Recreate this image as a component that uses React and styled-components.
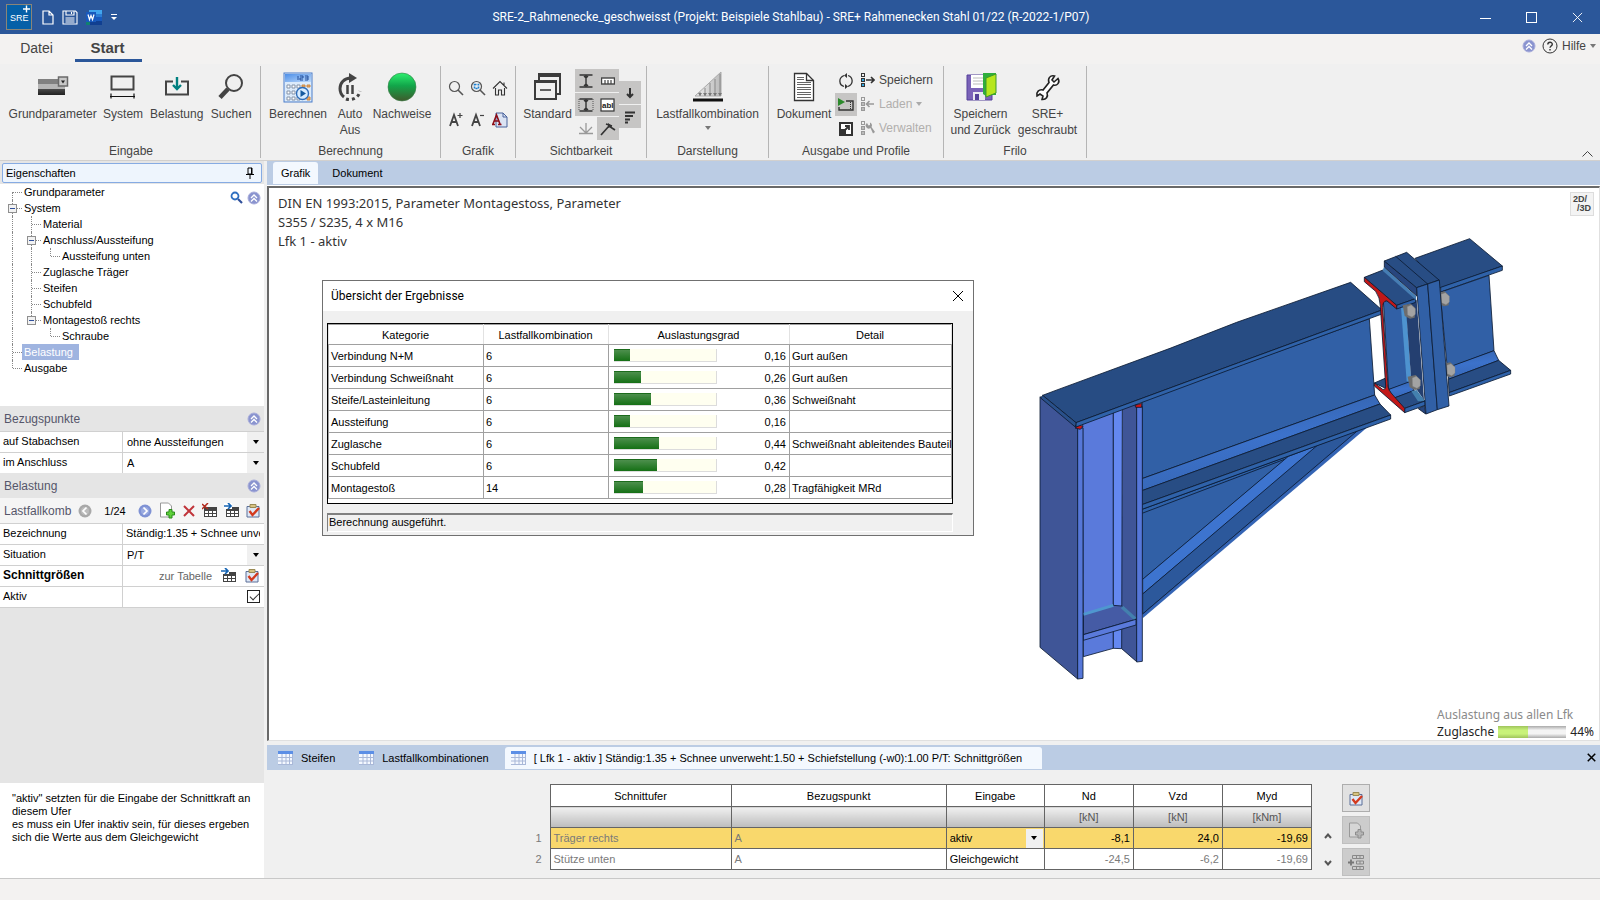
import { useState } from "react";
import styled, { createGlobalStyle } from "styled-components";

const treeRows = [
  { label: "Grundparameter", guides: ["first"] },
  { label: "System", guides: ["tee"], open: true },
  { label: "Material", guides: ["line", "tee"] },
  { label: "Anschluss/Aussteifung", guides: ["line", "tee"], open: true },
  { label: "Aussteifung unten", guides: ["line", "line", "end"] },
  { label: "Zuglasche Träger", guides: ["line", "tee"] },
  { label: "Steifen", guides: ["line", "tee"] },
  { label: "Schubfeld", guides: ["line", "tee"] },
  { label: "Montagestoß rechts", guides: ["line", "end"], open: true },
  { label: "Schraube", guides: ["line", "none", "end"] },
  { label: "Belastung", guides: ["tee"] },
  { label: "Ausgabe", guides: ["end"] },
];

const results = [
  { name: "Verbindung N+M", lfk: 6, value: 0.16, detail: "Gurt außen" },
  { name: "Verbindung Schweißnaht", lfk: 6, value: 0.26, detail: "Gurt außen" },
  { name: "Steife/Lasteinleitung", lfk: 6, value: 0.36, detail: "Schweißnaht" },
  { name: "Aussteifung", lfk: 6, value: 0.16, detail: "" },
  { name: "Zuglasche", lfk: 6, value: 0.44, detail: "Schweißnaht ableitendes Bauteil" },
  { name: "Schubfeld", lfk: 6, value: 0.42, detail: "" },
  { name: "Montagestoß", lfk: 14, value: 0.28, detail: "Tragfähigkeit MRd" },
];

/* ---------- icons ---------- */

const Svg = ({ w = 16, h = w, box, children }) => (
  <svg width={w} height={h} viewBox={box || `0 0 ${w} ${h}`} fill="none" aria-hidden="true">
    {children}
  </svg>
);

const RoundChevron = () => (
  <Svg w={14}>
    <circle cx="7" cy="7" r="6" fill="#8a94cf" stroke="#a9addb" />
    <path d="M4 7 7 4l3 3M4 10.500l3-3 3 3" stroke="#fff" strokeWidth="1.300" />
  </Svg>
);

const Logo = () => (
  <Svg w={26}>
    <rect x="0.500" y="0.500" width="25" height="25" fill="#0560a8" stroke="#8a8578" />
    <text x="4" y="17" fontSize="9" fill="#fff" fontFamily="Liberation Sans, sans-serif">
      SRE
    </text>
    <path d="M20.500 1.500v7M17 5h7" stroke="#fff" strokeWidth="1.400" />
  </Svg>
);

const NewDoc = () => (
  <Svg w={12} h={15}>
    <path d="M1 1h6l4 4v9H1zM7 1v4h4" stroke="#fff" strokeWidth="1.200" />
  </Svg>
);

const Disk = () => (
  <Svg w={16} h={15}>
    <path d="M1 1h12.500L15 2.500V14H1zM4 1v4h8V1M9.500 2v2M3.500 8h9M3.500 10h9M3.500 12h9" stroke="#fff" strokeWidth="1.100" />
  </Svg>
);

const WordIcon = () => (
  <Svg w={16}>
    <path d="M3 1h13v4H3z" fill="#41a5ee" />
    <path d="M3 5h13v3H3z" fill="#2b7cd3" />
    <path d="M3 8h13v4H3z" fill="#185abd" />
    <path d="M3 12h13v4H3z" fill="#103f91" />
    <path d="M0 12h4v4H0z" fill="#108070" />
    <path d="M0 3h10v10H0z" fill="#185abd" />
    <path d="M2 5.500 3.500 10.500 5 6.500l1.500 4L8 5.500" stroke="#fff" strokeWidth="1.200" />
  </Svg>
);

const Customize = () => (
  <Svg w={8}>
    <path d="M1 1.500h6" stroke="#fff" />
    <path d="M1 4h6L4 7z" fill="#fff" />
  </Svg>
);

const ParamIcon = () => (
  <Svg w={32} h={22}>
    <defs>
      <linearGradient id="dark" x1="0" y1="0" x2="0" y2="1">
        <stop offset="0" stopColor="#4a4a4a" />
        <stop offset="1" stopColor="#222" />
      </linearGradient>
    </defs>
    <path d="M1 3h21v5H1z" fill="#808080" />
    <path d="M1 8h27v5H1z" fill="#b5b5b5" />
    <path d="M1 13h27v6H1z" fill="url(#dark)" />
    <rect x="21.500" y="1" width="9" height="9" fill="#c8c8c8" stroke="#6a6a6a" strokeWidth="1.500" />
    <path d="M24 4.500h4l-2 3z" fill="#222" />
  </Svg>
);

const SystemIcon = () => (
  <Svg w={28} h={24}>
    <rect x="2.500" y="1.500" width="22" height="13" stroke="#444" strokeWidth="2" />
    <path d="M1 21.500h25M2 18.500v5M25 18.500v5" stroke="#111" strokeWidth="1.200" />
  </Svg>
);

const LoadIcon = () => (
  <Svg w={26} h={20}>
    <path d="M9 4.500H2v13h22v-13h-7" stroke="#444" strokeWidth="2" />
    <path d="M13 0v11M9 8l4 4 4-4" stroke="#008080" strokeWidth="2.400" />
  </Svg>
);

const SearchIcon = () => (
  <Svg w={28}>
    <circle cx="17" cy="10" r="8" stroke="#444" strokeWidth="2" />
    <path d="M11 16 3 24.500" stroke="#444" strokeWidth="4.500" />
  </Svg>
);

const CalcIcon = () => (
  <Svg w={30} h={31}>
    <defs>
      <linearGradient id="calc" x1="0" y1="0" x2="1" y2="1">
        <stop offset="0" stopColor="#4d8fe8" />
        <stop offset="1" stopColor="#bcd9fb" />
      </linearGradient>
    </defs>
    <rect x="1" y="1" width="28" height="29" fill="#dcebfb" stroke="#4a7cc9" />
    <path d="M2 2h26v8H2z" fill="url(#calc)" />
    <path d="M15 4v4M17 4h3v2h-3v2h3M22 4h3v4h-3M22 6h3" stroke="#234f9b" />
    <path
      d="M4 13h3v3H4zM9 13h3v3H9zM14 13h3v3h-3zM4 19h3v3H4zM9 19h3v3H9zM4 25h3v3H4zM9 25h3v3H9zM14 25h3v3h-3z"
      fill="#fff"
      stroke="#8493a8"
    />
    <path d="M19 13h3v2h-3zM24 13h3v2h-3zM24 25h3v3h-3z" fill="#f2a65a" stroke="#c98a48" />
    <circle cx="19.500" cy="21.500" r="6" fill="#d7ecff" stroke="#2f6db8" strokeWidth="1.400" />
    <path d="m17.500 18 5.500 3.500-5.500 3.500z" fill="#155a9f" />
  </Svg>
);

const AutoIcon = () => (
  <Svg w={26} h={30}>
    <path d="M14 6C7 6 3 11 3 16.500c0 4 2 7 4 8.500" stroke="#444" strokeWidth="3" />
    <path d="M12 1v10l8-5z" fill="#444" />
    <path d="M10.500 13v9M15.500 13v9" stroke="#444" strokeWidth="2.500" />
    <path d="M9 27c5 2 13-1 14-8" stroke="#444" strokeWidth="3" strokeDasharray="3 3" />
  </Svg>
);

const GreenBall = () => (
  <Svg w={30}>
    <defs>
      <linearGradient id="ball" x1="0" y1="0" x2="0" y2="1">
        <stop offset="0" stopColor="#2df06f" />
        <stop offset="0.450" stopColor="#12a64a" />
        <stop offset="1" stopColor="#3f5a2c" />
      </linearGradient>
    </defs>
    <circle cx="15" cy="15" r="14" fill="url(#ball)" stroke="#3a7d4a" strokeWidth="0.600" />
  </Svg>
);

const Lens = ({ inner }) => (
  <Svg w={16}>
    <circle cx="6.500" cy="6.500" r="5" stroke="#555" strokeWidth="1.200" />
    <path d="m10 10 5 5" stroke="#555" strokeWidth="1.600" />
    {inner && <rect x="4.500" y="4.500" width="4" height="4" stroke="#1a7fd0" strokeWidth="1.600" strokeDasharray="2 1" />}
  </Svg>
);

const Home = () => (
  <Svg w={16}>
    <path d="m1 8.500 7-7 7 7M3.500 8v7h3v-5h3v5h3V8M12 2.500v3" stroke="#333" strokeWidth="1.100" />
  </Svg>
);

const FontSize = ({ plus }) => (
  <Svg w={16}>
    <path d="m2 14 4-11 4 11M3.500 10h5" stroke="#444" strokeWidth="1.800" />
    <path d={plus ? "M12 1v5M9.500 3.500h5" : "M10 3.500h4"} stroke="#444" strokeWidth="1.200" />
  </Svg>
);

const FontPage = () => (
  <Svg w={16}>
    <path d="M4 1h7l4 4v10H4z" fill="#dbe3f3" stroke="#49639b" />
    <path d="M11 1v4h4" stroke="#49639b" />
    <path d="m1 12 3.500-9L8 12M2.500 9h4M0 12.500h3M6 12.500h3.500" stroke="#8c0d18" strokeWidth="1.600" />
  </Svg>
);

const StandardIcon = () => (
  <Svg w={30}>
    <path d="M6 9V2h21v20h-4" stroke="#3c3c3c" strokeWidth="2" />
    <path d="M6 3.500h21" stroke="#3c3c3c" strokeWidth="3" />
    <rect x="2" y="9" width="21" height="18" fill="#f0f0f0" stroke="#3c3c3c" strokeWidth="2" />
    <path d="M2 9.500h21" stroke="#3c3c3c" strokeWidth="3" />
    <path d="M7 18h11" stroke="#3c3c3c" strokeWidth="1.600" />
  </Svg>
);

const BeamSec = ({ framed }) => (
  <Svg w={16}>
    {framed && <path d="M1 2v12M15 2v12" stroke="#555" strokeDasharray="1 1" />}
    <path d="M1.500 2h13M1.500 14h13" stroke="#333" strokeWidth="1.600" />
    <path d="M8 2v12M6 3l2 2 2-2M6 13l2-2 2 2" stroke="#333" strokeWidth="1.400" />
  </Svg>
);

const Ruler = () => (
  <Svg w={14} h={8}>
    <rect x="0.500" y="1" width="13" height="6" fill="#fff" stroke="#444" strokeWidth="1.400" />
    <path d="M4 3v4M7 3v4M10 3v4" stroke="#444" strokeWidth="1.200" />
  </Svg>
);

const LabelIcon = () => (
  <Svg w={16} h={14}>
    <rect x="1" y="1" width="13" height="12" fill="#fff" stroke="#333" strokeWidth="1.200" />
    <text x="2" y="10" fontSize="8" fontWeight="700" fill="#222" fontFamily="Liberation Sans, sans-serif">
      abl
    </text>
  </Svg>
);

const DownArrow = () => (
  <Svg w={10} h={14}>
    <path d="M5 2v9M2 8l3 3 3-3" stroke="#333" strokeWidth="2" />
  </Svg>
);

const BarsIcon = () => (
  <Svg w={14}>
    <path d="M2 2.500h10M2 6h8M2 9.500h5M2 12.500h3" stroke="#333" strokeWidth="2.200" />
  </Svg>
);

const FanIcon = () => (
  <Svg w={16}>
    <path d="M1 12.500h14M8 2v10M8 12 2 6M8 12l6-6" stroke="#999" strokeWidth="1.300" />
  </Svg>
);

const AxisIcon = () => (
  <Svg w={16}>
    <path d="m1 14 8-9 6 4M6 3l6 2" stroke="#333" strokeWidth="1.700" />
    <path d="m8 2 4 3-4 2z" fill="#333" />
  </Svg>
);

const LoadCombo = () => (
  <Svg w={32} h={32}>
    <defs>
      <linearGradient id="tri" x1="0" y1="0" x2="1" y2="0">
        <stop offset="0" stopColor="#eee" />
        <stop offset="1" stopColor="#bbb" />
      </linearGradient>
    </defs>
    <path d="M3 25 29 1v24z" fill="url(#tri)" stroke="#aaa" />
    <path d="M8 21v4M13 17v8M18 12v13M23 8v17M28 3v22" stroke="#888" />
    <path d="m6 22 2 3 2-3m1 0 2 3 2-3m1 0 2 3 2-3m1 0 2 3 2-3m1 0 2 3 2-3" fill="#777" />
    <path d="M1 29h30" stroke="#111" strokeWidth="3" />
  </Svg>
);

const DocIcon = () => (
  <Svg w={22} h={30}>
    <path d="M1.500 1.500h12l7 7v20h-19z" fill="#fff" stroke="#333" strokeWidth="1.300" />
    <path d="M13.500 1.500v7h7" stroke="#333" strokeWidth="1.300" />
    <path
      d="M4 5.500h7M4 7.500h7M4 10.500h14M4 12.500h14M4 15.500h14M4 17.500h14M4 20.500h14M4 22.500h14M4 25.500h14"
      stroke="#666"
    />
  </Svg>
);

const Refresh = () => (
  <Svg w={14} h={16}>
    <path d="M5 2.500C-1 5 0 12 5 13.500M9 13.500c6-2.500 5-9.500 0-11" stroke="#333" strokeWidth="1.300" />
    <path d="M8 0v5L5 2.500zM6 16v-5l3 2.500z" fill="#333" />
  </Svg>
);

const PlayFilm = () => (
  <Svg w={16} h={14}>
    <path d="M8 3h7v9H1V9" stroke="#333" strokeWidth="1.400" />
    <path d="M12.500 4v8" stroke="#333" strokeDasharray="1 1" />
    <path d="m0 0 7 4-7 4z" fill="#2c8a2c" />
  </Svg>
);

const Expand = () => (
  <Svg w={14}>
    <path d="M1 1h12v12H1z" fill="#fff" stroke="#333" strokeWidth="2" />
    <path d="M1 7h6v6H1z" fill="#333" />
    <path d="m5 9 5-5M6 4h4v4" stroke="#333" strokeWidth="1.800" />
  </Svg>
);

const ProfileIcon = ({ kind }) => {
  const c = kind === "save" ? "#333" : "#999";
  const f = kind === "save" ? "#35a8e0" : "#bbb";
  return (
    <Svg w={14}>
      <rect x="0.500" y="0.500" width="3" height="3" stroke={c} />
      <rect x="0.500" y="5.500" width="3" height="3" fill={f} stroke={c} />
      <rect x="0.500" y="10.500" width="3" height="3" fill={f} stroke={c} />
      {kind === "save" && <path d="M5 7h8M10 4l3 3-3 3" stroke={c} strokeWidth="1.600" />}
      {kind === "load" && <path d="M5.500 7H13M8.500 4l-3 3 3 3" stroke={c} strokeWidth="1.600" />}
      {kind === "manage" && (
        <path d="M6 2a3 3 0 0 0 3.500 5L12 12.500l2-1.500-3.500-5A3 3 0 0 0 9 1.500V4L7.500 4.500z" fill={c} />
      )}
    </Svg>
  );
};

const SaveBack = () => (
  <Svg w={32} h={30}>
    <path d="M2 3h25v25H2z" fill="#7a62b8" stroke="#54419a" />
    <path d="M6 3h14v13H6z" fill="#fff" />
    <path d="M8 6h10M8 9h10M8 12h10" stroke="#bbb" />
    <path d="M8 20h12v8H8z" fill="#e8e8f0" />
    <path d="M10 22h4v6h-4z" fill="#54419a" />
    <path d="M18 1h13v22h-5V6h-8z" fill="#2fae3d" />
    <path d="M18 1h13L21 6v18l-3-2z" fill="#2fae3d" />
    <path d="m21 6 10-4v19l-10 4z" fill="#b6e61d" stroke="#3e9a2a" />
  </Svg>
);

const Wrench = () => (
  <Svg w={26} h={27}>
    <path
      d="M23 4.500 19 8l-2-2 2.500-4C15 1 12.500 4.500 14 8.500L8 16c-4-1-7 2-6 6l3-2 3 2-1 3.500c4 .5 6.500-3 5-6.500l6.500-8C22 12 25.500 8.500 23 4.500z"
      stroke="#222"
      strokeWidth="1.600"
      fill="#fff"
    />
  </Svg>
);

const Caret = ({ color = "#000" }) => (
  <Svg w={6} h={4}>
    <path d="M0 0h6L3 4z" fill={color} />
  </Svg>
);

const Cross = ({ size = 11, color = "#000", weight = 1 }) => (
  <Svg w={size} box="0 0 12 12">
    <path d="m1 1 10 10M11 1 1 11" stroke={color} strokeWidth={weight} />
  </Svg>
);

const Clipboard = () => (
  <Svg w={15}>
    <path d="M1 3.500h12V14H1z" fill="#dfe8f6" stroke="#5a6f98" />
    <path d="M4 1.500h6v3H4z" fill="#d7c382" stroke="#9a8a54" />
    <path d="m3.500 8 3 4 6.500-7" stroke="#d33a1f" strokeWidth="2.400" />
  </Svg>
);

const GridIcon = ({ mode }) => (
  <Svg w={15}>
    <path d="M2 4h13v10H2z" fill="#444" />
    <path d="M3 8h3v2H3zM7 8h3v2H7zM11 8h3v2h-3zM3 11h3v2H3zM7 11h3v2H7zM11 11h3v2h-3z" fill="#fff" />
    {mode === "delete" ? (
      <path d="m0 1 6 5M6 0 0 6" stroke="#b1281c" strokeWidth="1.500" />
    ) : (
      <>
        <path d="M0 0h8v6H0z" fill="#fff" />
        <path d="M0 3h7M4 0l3 3-3 3" stroke="#1464b4" strokeWidth="1.700" />
      </>
    )}
  </Svg>
);

const AddPage = ({ gray }) => (
  <Svg w={17}>
    <path d="M1.500 1h8l3 3v11h-11z" fill={gray ? "#d6d6d6" : "#fff"} stroke="#999" />
    <path
      d="M10 7.500h3V10h2.500v3H13v3h-3v-3H7.500v-3H10z"
      fill={gray ? "#b5b5b5" : "#5fd03a"}
      stroke={gray ? "#8c8c8c" : "#2b8a1c"}
    />
  </Svg>
);

const InsertRow = () => (
  <Svg w={17}>
    <path d="M4.500 1.500h11v3h-11zM8.500 7h7v3h-7zM4.500 12.500h11v3h-11zM8.500 1.500v3M12 1.500v3M12 7v3M8.500 12.500v3M12 12.500v3" stroke="#888" />
    <path d="M0 8.500h6M3 5.500v6" stroke="#777" strokeWidth="1.800" />
  </Svg>
);

const TabGrid = () => (
  <Svg w={15}>
    <path d="M0 0h15v14H0z" fill="#f4f8ff" />
    <path d="M0 0h15v3H0z" fill="#5c8fe6" />
    <path d="M0 6.500h15M0 10h15M0 13.500h15M4 3v11M8 3v11M11.500 3v11M14.500 3v11" stroke="#a9b8d8" />
  </Svg>
);

const NavDot = ({ back }) => (
  <Svg w={14}>
    <circle cx="7" cy="7" r="6.500" fill={back ? "#a9a9a9" : "#7f92d4"} />
    <circle cx="7" cy="7" r="4" fill={back ? "#bdbdbd" : "#9aaae0"} />
    <path d={back ? "M8.500 3.500 5 7l3.500 3.500" : "M5.500 3.500 9 7l-3.500 3.500"} stroke="#fff" strokeWidth="1.700" />
  </Svg>
);

/* ---------- 3D model of the frame corner ---------- */

const Bolt = ({ x, y }) => (
  <g transform={`translate(${x} ${y})`}>
    <path d="m-20-18 24-5 14 14-2 28-14 3-16-8z" fill="#6d6d6d" />
    <path d="m-6-14 12-5 12 11v17L8 17l-13-6z" fill="#a3a3a3" stroke="#8a8a8a" />
  </g>
);

const FrameModel = () => (
  <svg width="500" height="460" viewBox="0 0 1500 1380" role="img" aria-label="3D Rahmenecke">
    <defs>
      <linearGradient id="fillet" x1="0" y1="0" x2="0.150" y2="1">
        <stop offset="0" stopColor="#3463ad" />
        <stop offset="0.500" stopColor="#3c72cb" />
        <stop offset="1" stopColor="#3768b8" />
      </linearGradient>
    </defs>
    <g stroke="#0b1a33" strokeWidth="2.500" strokeLinejoin="round">
      {/* haunch */}
      <path d="M336 836 780 676 336 1050z" fill="#3160a6" />
      <path d="M336 838 1000 596l-20 10L336 850z" fill="#2f62a9" />
      <path d="M775 679 870 643 338 1092v-44z" fill="#3d74cf" />
      <path d="m862 646 128-48L338 1152v-60z" fill="#2c589b" />
      <path d="m985 600 28-9L338 1165v-13z" fill="#3464b4" stroke="none" />
      <path d="M985 600 338 1152" fill="none" />
      {/* beam */}
      <path d="M336 512 1018 266l16 229L336 746z" fill="#3160a6" />
      <path d="m1034 495 16 27L336 782v-36z" fill="url(#fillet)" />
      <path d="m1050 522 32 33L336 824v-42z" fill="#284d84" />
      <path d="M1082 555v12L336 838v-14z" fill="#2f62a9" />
      {/* column */}
      <path d="M158 575 250 545v710l-90 25z" fill="#5a7adb" />
      <path d="M250 540h27v716l-27-1z" fill="#6488f0" stroke="none" />
      <path d="M250 540v715l25 1" fill="none" />
      <path d="m277 535 43-15v775l-45-39z" fill="#3f5597" />
      <path d="m160 1153 90-27 25 2 43 40-158 46z" fill="#455ba5" />
      <path d="m160 1153 90-27" stroke="#4f97cf" strokeWidth="9" />
      <path d="m276 1131 40 36" stroke="#4380ae" strokeWidth="10" />
      <path d="m160 1214 158-46v17l-158 46z" fill="#5a7adb" />
      <path d="M320 530h17v764l-17 2z" fill="#5677d8" />
      <path d="m30 500 113 92v755L30 1252z" fill="#3f5597" />
      <path d="M143 594h16v751l-16 2z" fill="#5677d8" />
      <path d="m135 594 14-9 10 4-8 9z" fill="#d11414" />
      {/* top flange */}
      <path d="M38 496 75 482 420 355 620 277 962 157l94 83-430 158L138 578z" fill="#274c83" />
      <path d="m1056 240v12L640 404 138 591v-13l488-180z" fill="#2f62a9" />
      <path d="m38 496-6 8 104 87 2-13z" fill="#29508a" />
      <path d="m315 526 20-6v12h-18z" fill="#d11414" />

      {/* rear part of the bolted joint */}
      <path d="m1155 85 164-59 98 82-187 66z" fill="#284d84" />
      <path d="M1417 108v13l-185 65v-14z" fill="#2f62a9" />
      <path d="m1230 187 147-51 15 226-140 53z" fill="#3160a6" />
      <path d="m1392 362 14 29-150 57-4-35z" fill="url(#fillet)" />
      <path d="m1406 391 36 30-185 67-2-40z" fill="#284d84" />
      <path d="M1442 421v11l-184 66-1-10z" fill="#2f62a9" />
    </g>
    <Bolt x={1240} y={207} />
    <Bolt x={1257} y={420} />
    <g stroke="#0b1a33" strokeWidth="2.500" strokeLinejoin="round">
      {/* front part */}
      <path d="m1033 459 32-14 10 34z" fill="#284d84" />
      <path d="m1060 212 60 10 20 235-64 22z" fill="#3160a6" />
      <path d="m1077 478 62-23 14 27-63 23z" fill="url(#fillet)" />
      <path d="m1090 505 60-23 35 31-61 22z" fill="#284d84" />
      <path d="m1124 535 61-22v13l-61 22z" fill="#2f62a9" />
      <path d="m1113 232 16 2 15 222-14-2z" fill="#4e93cf" stroke="none" />
      <path d="m1127 222 33-12 22 300-38-54z" fill="#243f70" stroke="none" />
      <path d="m1144 484 16-4 24 32-20 2z" fill="#4380ae" stroke="none" />
      <path d="m1003 142 56-22 98 86-57 20z" fill="#284d84" />
      <path d="m1100 226 57-20v11l-57 20z" fill="#2f62a9" />
      <path d="m1062 110 96 88v12l-100-88z" fill="#457db3" stroke="none" />
      <path
        d="m1003 142 97 84v11l-30-25q-12 2-12 20l16 238q2 12 12 22l38 43v13l-91-80v-9l25 19q9 2 9-10l-16-240q-1-26-14-44L1003 155z"
        fill="#c21818"
      />
      {/* end plates */}
      <path d="m1063 93 97 80v25l-97-87z" fill="#28467e" />
      <path d="m1063 93 67-26 97 83-67 23z" fill="#284d84" />
      <path d="m1097 79 96 83" fill="none" />
      <path d="m1165 536 22 16-3-25z" fill="#28467e" />
      <path d="m1160 173 33-11 29 377-34 13z" fill="#3160a6" />
      <path d="m1193 162 35-12 29 378-35 11z" fill="#3160a6" />
    </g>
    <Bolt x={1138} y={244} />
    <Bolt x={1153} y={458} />
  </svg>
);

/* ---------- page ---------- */

const App = () => {
  const [selected, setSelected] = useState("Belastung");
  const [open, setOpen] = useState(true);
  return (
    <Page>
      <GlobalStyle />
      <TitleBar>
        <QuickAccess>
          <Logo />
          <PlainButton aria-label="Neu"><NewDoc /></PlainButton>
          <PlainButton aria-label="Speichern"><Disk /></PlainButton>
          <PlainButton aria-label="Word"><WordIcon /></PlainButton>
          <PlainButton aria-label="Anpassen"><Customize /></PlainButton>
        </QuickAccess>
        <h1>SRE-2_Rahmenecke_geschweisst (Projekt: Beispiele Stahlbau) - SRE+ Rahmenecken Stahl 01/22 (R-2022-1/P07)</h1>
        <WindowButtons>
          <PlainButton aria-label="Minimieren">
            <Svg w={11}><path d="M0 6.500h11" stroke="#fff" /></Svg>
          </PlainButton>
          <PlainButton aria-label="Maximieren">
            <Svg w={11}><rect x="0.500" y="0.500" width="10" height="10" stroke="#fff" /></Svg>
          </PlainButton>
          <PlainButton aria-label="Schließen"><Cross color="#fff" /></PlainButton>
        </WindowButtons>
      </TitleBar>

      <RibbonTabs>
        <RibbonTab>Datei</RibbonTab>
        <RibbonTab $active>Start</RibbonTab>
        <Help>
          <PlainButton aria-label="Einklappen"><RoundChevron /></PlainButton>
          <PlainButton>
            <Svg w={16}>
              <circle cx="8" cy="8" r="7" stroke="#333" />
              <path d="M5.800 6.500c0-3 4.500-3 4.500-.3C10.300 8 8 8 8 9.800M8 11v1.500" stroke="#333" strokeWidth="1.400" />
            </Svg>
            Hilfe
            <Caret color="#777" />
          </PlainButton>
        </Help>
      </RibbonTabs>

      <Ribbon>
        <Group $w={259}>
          <GroupBody>
            <BigButton $w={94}><i><ParamIcon /></i>Grundparameter</BigButton>
            <BigButton $w={48}><i><SystemIcon /></i>System</BigButton>
            <BigButton $w={60}><i><LoadIcon /></i>Belastung</BigButton>
            <BigButton $w={50}><i><SearchIcon /></i>Suchen</BigButton>
          </GroupBody>
          <GroupName>Eingabe</GroupName>
        </Group>
        <Group $w={180}>
          <GroupBody>
            <BigButton $w={66}><i><CalcIcon /></i>Berechnen</BigButton>
            <BigButton $w={38}>
              <i><AutoIcon /></i>
              <span>Auto<br />Aus</span>
            </BigButton>
            <BigButton $w={66}><i><GreenBall /></i>Nachweise</BigButton>
          </GroupBody>
          <GroupName>Berechnung</GroupName>
        </Group>
        <Group $w={75}>
          <IconGrid>
            <PlainButton aria-label="Zoom"><Lens /></PlainButton>
            <PlainButton aria-label="Zoom Fenster"><Lens inner /></PlainButton>
            <PlainButton aria-label="Gesamtansicht"><Home /></PlainButton>
            <PlainButton aria-label="Schrift größer"><FontSize plus /></PlainButton>
            <PlainButton aria-label="Schrift kleiner"><FontSize /></PlainButton>
            <PlainButton aria-label="Schriftart"><FontPage /></PlainButton>
          </IconGrid>
          <GroupName>Grafik</GroupName>
        </Group>
        <Group $w={131}>
          <GroupBody>
            <BigButton $w={55}><i><StandardIcon /></i>Standard</BigButton>
            <ToggleColumn>
              <Toggle $on aria-label="Profil"><BeamSec /></Toggle>
              <Toggle $on aria-label="Schnitt"><BeamSec framed /></Toggle>
              <Toggle aria-label="Auflager"><FanIcon /></Toggle>
            </ToggleColumn>
            <ToggleColumn>
              <Toggle $on aria-label="Maße"><Ruler /></Toggle>
              <Toggle $on aria-label="Beschriftung"><LabelIcon /></Toggle>
              <Toggle $on aria-label="Achsen"><AxisIcon /></Toggle>
            </ToggleColumn>
            <ToggleColumn>
              <Toggle $on aria-label="Lasten"><DownArrow /></Toggle>
              <Toggle $on aria-label="Ausnutzung"><BarsIcon /></Toggle>
            </ToggleColumn>
          </GroupBody>
          <GroupName>Sichtbarkeit</GroupName>
        </Group>
        <Group $w={122}>
          <GroupBody>
            <BigButton $w={114}>
              <i><LoadCombo /></i>
              Lastfallkombination
              <b><Caret color="#777" /></b>
            </BigButton>
          </GroupBody>
          <GroupName>Darstellung</GroupName>
        </Group>
        <Group $w={175}>
          <GroupBody>
            <BigButton $w={62}><i><DocIcon /></i>Dokument</BigButton>
            <ToggleColumn>
              <Toggle aria-label="Aktualisieren"><Refresh /></Toggle>
              <Toggle $on aria-label="Animation"><PlayFilm /></Toggle>
              <Toggle aria-label="Vergrößern"><Expand /></Toggle>
            </ToggleColumn>
            <ProfileColumn>
              <PlainButton><ProfileIcon kind="save" />Speichern</PlainButton>
              <PlainButton disabled><ProfileIcon kind="load" />Laden <Caret color="#aaa" /></PlainButton>
              <PlainButton disabled><ProfileIcon kind="manage" />Verwalten</PlainButton>
            </ProfileColumn>
          </GroupBody>
          <GroupName>Ausgabe und Profile</GroupName>
        </Group>
        <Group $w={143}>
          <GroupBody>
            <BigButton $w={66}>
              <i><SaveBack /></i>
              <span>Speichern<br />und Zurück</span>
            </BigButton>
            <BigButton $w={70}>
              <i><Wrench /></i>
              <span>SRE+<br />geschraubt</span>
            </BigButton>
          </GroupBody>
          <GroupName>Frilo</GroupName>
        </Group>
        <CollapseButton aria-label="Menüband reduzieren">
          <Svg w={11} h={6}><path d="m0.500 5.500 5-5 5 5" stroke="#444" /></Svg>
        </CollapseButton>
      </Ribbon>

      <Main>
        <Sidebar>
          <PanelTitle>
            Eigenschaften
            <PlainButton aria-label="Anheften">
              <Svg w={8} h={12}>
                <path d="M2 1h4v6H2zM0 7.500h8M4 8v4" stroke="#000" />
                <path d="M5 1h1v6H5z" fill="#000" />
              </Svg>
            </PlainButton>
          </PanelTitle>
          <TreePanel>
            <Tree role="tree">
              {treeRows.map((row) => (
                <li key={row.label} role="treeitem" aria-selected={selected === row.label}>
                  {row.guides.map((g, i) => (
                    <Guide key={i} $type={g}>
                      {row.open && i === row.guides.length - 1 && <Box aria-label="Zuklappen" />}
                    </Guide>
                  ))}
                  <TreeLabel $active={selected === row.label} onClick={() => setSelected(row.label)}>
                    {row.label}
                  </TreeLabel>
                </li>
              ))}
            </Tree>
            <TreeTools>
              <PlainButton aria-label="Suchen">
                <Svg w={13}>
                  <circle cx="5" cy="5" r="3.500" stroke="#2f6fc0" strokeWidth="1.800" />
                  <path d="m8 8 4 4" stroke="#2f4f9a" strokeWidth="2.200" />
                </Svg>
              </PlainButton>
              <PlainButton aria-label="Alle zuklappen"><RoundChevron /></PlainButton>
            </TreeTools>
          </TreePanel>

          <SectionHead>Bezugspunkte<PlainButton aria-label="Einklappen"><RoundChevron /></PlainButton></SectionHead>
          <Field>
            <label htmlFor="stab">auf Stabachsen</label>
            <Pick id="stab" options={["ohne Aussteifungen", "mit Aussteifungen"]} />
          </Field>
          <Field>
            <label htmlFor="anschluss">im Anschluss</label>
            <Pick id="anschluss" options={["A", "B"]} />
          </Field>
          <SectionHead>Belastung<PlainButton aria-label="Einklappen"><RoundChevron /></PlainButton></SectionHead>
          <LoadCaseBar>
            <span>Lastfallkomb</span>
            <PlainButton aria-label="Zurück"><NavDot back /></PlainButton>
            <output>1/24</output>
            <PlainButton aria-label="Weiter"><NavDot /></PlainButton>
            <PlainButton aria-label="Hinzufügen"><AddPage /></PlainButton>
            <PlainButton aria-label="Löschen"><Cross size={12} color="#c0343a" weight={2} /></PlainButton>
            <PlainButton aria-label="Tabelle löschen"><GridIcon mode="delete" /></PlainButton>
            <PlainButton aria-label="Zur Tabelle"><GridIcon /></PlainButton>
            <PlainButton aria-label="Bearbeiten"><Clipboard /></PlainButton>
          </LoadCaseBar>
          <Field>
            <label htmlFor="bez">Bezeichnung</label>
            <TextInput id="bez" defaultValue="Ständig:1.35 + Schnee unverweht:1.50" />
          </Field>
          <Field>
            <label htmlFor="sit">Situation</label>
            <Pick id="sit" options={["P/T", "A"]} />
          </Field>
          <Field>
            <b>Schnittgrößen</b>
            <FieldTools>
              zur Tabelle
              <PlainButton aria-label="Zur Tabelle"><GridIcon /></PlainButton>
              <PlainButton aria-label="Bearbeiten"><Clipboard /></PlainButton>
            </FieldTools>
          </Field>
          <Field>
            <label htmlFor="aktiv">Aktiv</label>
            <FieldTools>
              <CheckBox id="aktiv" type="checkbox" defaultChecked />
            </FieldTools>
          </Field>
          <Filler />
          <HelpText>
            "aktiv" setzten für die Eingabe der Schnittkraft an diesem Ufer
            <br />
            es muss ein Ufer inaktiv sein, für dieses ergeben sich die Werte aus dem Gleichgewicht
          </HelpText>
        </Sidebar>

        <Content>
          <TabStrip>
            <Tab $active>Grafik</Tab>
            <Tab>Dokument</Tab>
          </TabStrip>
          <Canvas>
            <Caption>
              DIN EN 1993:2015, Parameter Montagestoss, Parameter
              <br />
              S355 / S235, 4 x M16
              <br />
              Lfk 1 - aktiv
            </Caption>
            <ViewSwitch aria-label="2D oder 3D">
              <span>2D/</span>
              <span>/3D</span>
            </ViewSwitch>
            <FrameModel />
            <Usage>
              Auslastung aus allen Lfk
              <div>
                Zuglasche
                <UsageBar><div style={{ width: "44%" }} /></UsageBar>
                44%
              </div>
            </Usage>
            {open && (
              <Dialog role="dialog" aria-label="Übersicht der Ergebnisse">
                <header>
                  Übersicht der Ergebnisse
                  <PlainButton aria-label="Schließen" onClick={() => setOpen(false)}><Cross size={12} /></PlainButton>
                </header>
                <ResultFrame>
                  <ResultTable>
                    <colgroup>
                      <col width="155" />
                      <col width="125" />
                      <col width="181" />
                      <col />
                    </colgroup>
                    <thead>
                      <tr>
                        <th>Kategorie</th>
                        <th>Lastfallkombination</th>
                        <th>Auslastungsgrad</th>
                        <th>Detail</th>
                      </tr>
                    </thead>
                    <tbody>
                      {results.map((r) => (
                        <tr key={r.name}>
                          <td>{r.name}</td>
                          <td>{r.lfk}</td>
                          <td>
                            <Degree>
                              <Meter><div style={{ width: `${r.value * 100}%` }} /></Meter>
                              {r.value.toFixed(2).replace(".", ",")}
                            </Degree>
                          </td>
                          <td>{r.detail}</td>
                        </tr>
                      ))}
                    </tbody>
                  </ResultTable>
                </ResultFrame>
                <Status>Berechnung ausgeführt.</Status>
              </Dialog>
            )}
          </Canvas>

          <LowerTabs>
            <LowerTab><TabGrid />Steifen</LowerTab>
            <LowerTab><TabGrid />Lastfallkombinationen</LowerTab>
            <LowerTab $active>
              <TabGrid />[ Lfk 1 - aktiv ] Ständig:1.35 + Schnee unverweht:1.50 + Schiefstellung (-w0):1.00 P/T: Schnittgrößen
            </LowerTab>
            <PlainButton aria-label="Schließen"><Cross size={9} weight={2} /></PlainButton>
          </LowerTabs>
          <LowerPanel>
            <ForceTable>
              <colgroup>
                <col width="18" />
                <col width="181" />
                <col width="215" />
                <col width="98" />
                <col width="89" />
                <col width="89" />
                <col width="89" />
              </colgroup>
              <thead>
                <tr>
                  <td />
                  <th>Schnittufer</th>
                  <th>Bezugspunkt</th>
                  <th>Eingabe</th>
                  <th>Nd</th>
                  <th>Vzd</th>
                  <th>Myd</th>
                </tr>
                <UnitRow>
                  <td />
                  <th />
                  <th />
                  <th />
                  <th>[kN]</th>
                  <th>[kN]</th>
                  <th>[kNm]</th>
                </UnitRow>
              </thead>
              <tbody>
                <ForceRow $active>
                  <td>1</td>
                  <td>Träger rechts</td>
                  <td>A</td>
                  <td><Pick label="Eingabe" options={["aktiv", "Gleichgewicht"]} /></td>
                  <td>-8,1</td>
                  <td>24,0</td>
                  <td>-19,69</td>
                </ForceRow>
                <ForceRow>
                  <td>2</td>
                  <td>Stütze unten</td>
                  <td>A</td>
                  <td>Gleichgewicht</td>
                  <td>-24,5</td>
                  <td>-6,2</td>
                  <td>-19,69</td>
                </ForceRow>
              </tbody>
            </ForceTable>
            <Scroller>
              <PlainButton aria-label="Nach oben">
                <Svg w={8} h={6}><path d="m1 5 3-3.500L7 5" stroke="#555" strokeWidth="2" /></Svg>
              </PlainButton>
              <PlainButton aria-label="Nach unten">
                <Svg w={8} h={6}><path d="m1 1 3 3.500L7 1" stroke="#555" strokeWidth="2" /></Svg>
              </PlainButton>
            </Scroller>
            <SideTools>
              <SideButton aria-label="Bearbeiten"><Clipboard /></SideButton>
              <SideButton disabled aria-label="Hinzufügen"><AddPage gray /></SideButton>
              <SideButton disabled aria-label="Zeile einfügen"><InsertRow /></SideButton>
            </SideTools>
          </LowerPanel>
        </Content>
      </Main>
      <StatusBar />
    </Page>
  );
};

const Pick = ({ id, label, options }) => (
  <PickBox>
    <select id={id} aria-label={label}>
      {options.map((o) => (
        <option key={o}>{o}</option>
      ))}
    </select>
    <span><Caret /></span>
  </PickBox>
);

export default App;

const GlobalStyle = createGlobalStyle`
  * {
    box-sizing: border-box;
  }
  body {
    margin: 0;
    font: 11px/14px "Liberation Sans", Arial, sans-serif;
    color: #000;
  }
  button, input, select {
    font: inherit;
    color: inherit;
  }
  svg {
    display: block;
    flex-shrink: 0;
  }
`;

const Page = styled.div`
  display: flex;
  flex-direction: column;
  min-height: 100vh;
  background: #f0f0f0;
`;

const PlainButton = styled.button`
  display: flex;
  align-items: center;
  justify-content: center;
  padding: 0;
  border: none;
  background: none;
`;

const TitleBar = styled.header`
  display: grid;
  grid-template-columns: 1fr auto 1fr;
  align-items: center;
  height: 34px;
  background: #2b579a;
  color: #fff;
  h1 {
    margin: 0;
    padding-right: 18px;
    font: 12px/16px Roboto, "Open Sans", sans-serif;
  }
`;

const QuickAccess = styled.div`
  display: flex;
  align-items: center;
  gap: 8px;
  padding-left: 6px;
  > svg {
    margin-right: 2px;
  }
`;

const WindowButtons = styled.div`
  display: flex;
  justify-content: flex-end;
  button {
    width: 46px;
    height: 34px;
  }
`;

const RibbonTabs = styled.nav`
  display: flex;
  align-items: stretch;
  height: 30px;
  padding: 0 4px 2px 0;
  background: #f3f2f1;
  color: #444;
`;

const RibbonTab = styled.button`
  width: ${(p) => (p.$active ? "67px" : "75px")};
  padding: 2px 2px 0 0;
  border: none;
  border-bottom: 3px solid ${(p) => (p.$active ? "#2b579a" : "transparent")};
  background: none;
  font-size: ${(p) => (p.$active ? "15px" : "14px")};
  font-weight: ${(p) => (p.$active ? 700 : 400)};
`;

const Help = styled.div`
  display: flex;
  align-items: center;
  gap: 6px;
  margin-left: auto;
  padding-bottom: 5px;
  button {
    gap: 4px;
    font-size: 12px;
  }
`;

const Ribbon = styled.section`
  display: flex;
  height: 97px;
  padding: 2px 0 0 2px;
  border-bottom: 1px solid #d2d0ce;
  color: #444;
  font-size: 12px;
  line-height: 16px;
`;

const Group = styled.div`
  display: flex;
  flex-direction: column;
  width: ${(p) => p.$w}px;
  height: 92px;
  border-right: 1px solid #b5b5b5;
  text-align: center;
`;

const GroupBody = styled.div`
  display: flex;
  flex: 1;
  padding: 2px 4px 0;
`;

const GroupName = styled.div`
  line-height: 14px;
`;

const BigButton = styled.button`
  display: flex;
  flex-direction: column;
  align-items: center;
  width: ${(p) => p.$w}px;
  padding: 0;
  border: none;
  background: none;
  white-space: nowrap;
  i {
    display: flex;
    align-items: center;
    justify-content: center;
    height: 38px;
  }
  b {
    padding-top: 4px;
  }
`;

const IconGrid = styled.div`
  display: grid;
  grid-template-columns: repeat(3, 22px);
  grid-template-rows: 32px 32px;
  flex: 1;
  padding: 6px 0 0 4px;
`;

const ToggleColumn = styled.div`
  display: flex;
  flex-direction: column;
  justify-content: center;
  gap: 1px;
  height: 73px;
`;

const Toggle = styled.button`
  display: flex;
  align-items: center;
  justify-content: center;
  width: 22px;
  height: 23px;
  padding: 0;
  border: none;
  background: ${(p) => (p.$on ? "#c6c5c4" : "none")};
`;

const ProfileColumn = styled.div`
  display: flex;
  flex-direction: column;
  align-items: flex-start;
  padding-left: 4px;
  button {
    gap: 4px;
    height: 24px;
  }
  button:disabled {
    color: #b1afad;
  }
`;

const CollapseButton = styled(PlainButton)`
  align-self: flex-end;
  margin: 0 7px 3px auto;
`;

const Main = styled.main`
  display: grid;
  grid-template-columns: 264px minmax(0, 1fr);
  gap: 3px;
  flex: 1;
`;

const Sidebar = styled.aside`
  display: flex;
  flex-direction: column;
  background: #e5e5e5;
`;

const PanelTitle = styled.div`
  display: flex;
  align-items: center;
  justify-content: space-between;
  height: 20px;
  margin: 2px 2px 1px;
  padding: 0 7px 0 3px;
  border: 1px solid #86abe3;
  border-radius: 2px;
  background: #eef5fd;
`;

const TreePanel = styled.div`
  display: flex;
  justify-content: space-between;
  height: 222px;
  background: #fff;
`;

const Tree = styled.ul`
  margin: 0;
  padding: 0 0 0 3px;
  list-style: none;
  li {
    display: flex;
    height: 16px;
  }
`;

const guideSpan = { first: "8px 0 0", line: "0", tee: "0", end: "0 0 8px", none: "16px 0 0" };

const Guide = styled.span`
  position: relative;
  width: 19px;
  &::before {
    content: "";
    position: absolute;
    inset: ${(p) => guideSpan[p.$type]};
    left: 9px;
    border-left: 1px dotted #888;
  }
  &::after {
    content: "";
    position: absolute;
    top: 8px;
    left: 10px;
    right: 0;
    border-top: ${(p) => (p.$type === "line" || p.$type === "none" ? "none" : "1px dotted #888")};
  }
`;

const Box = styled.button`
  position: absolute;
  z-index: 1;
  top: 4px;
  left: 5px;
  width: 9px;
  height: 9px;
  padding: 0;
  border: 1px solid #8f8f8f;
  background: linear-gradient(#2f4f9a, #2f4f9a) center / 5px 1px no-repeat, #f2f2f2;
`;

const TreeLabel = styled.button`
  padding: 0 6px 0 2px;
  border: none;
  background: ${(p) => (p.$active ? "#9fb4e0" : "none")};
  color: ${(p) => (p.$active ? "#fff" : "#000")};
  line-height: 16px;
`;

const TreeTools = styled.div`
  display: flex;
  align-items: flex-start;
  gap: 4px;
  padding: 7px 3px 0 0;
`;

const SectionHead = styled.h2`
  display: flex;
  align-items: center;
  justify-content: space-between;
  height: 25px;
  margin: 0;
  padding: 0 3px 0 4px;
  color: #55566a;
  font-size: 12px;
  font-weight: 400;
`;

const Field = styled.div`
  display: grid;
  grid-template-columns: 122px minmax(0, 1fr);
  gap: 1px;
  height: 21px;
  border-top: 1px solid #d0d0d0;
  background: #d0d0d0;
  > * {
    background: #fff;
  }
  > label,
  > b {
    padding-left: 3px;
    line-height: 18px;
  }
  > b {
    font-size: 12px;
  }
`;

const PickBox = styled.div`
  display: flex;
  select {
    flex: 1;
    min-width: 0;
    padding: 0 0 0 4px;
    border: none;
    outline: none;
    appearance: none;
    background: none;
  }
  span {
    display: flex;
    align-items: center;
    justify-content: center;
    width: 17px;
    background: #f0f0f0;
  }
`;

const TextInput = styled.input`
  min-width: 0;
  margin: 0;
  padding: 0 0 2px 3px;
  border: none;
  border-right: 4px solid #fff;
  outline: none;
`;

const FieldTools = styled.div`
  display: flex;
  align-items: center;
  justify-content: flex-end;
  gap: 9px;
  padding: 0 4px 1px 0;
  color: #666;
`;

const CheckBox = styled.input`
  appearance: none;
  width: 13px;
  height: 13px;
  margin: 0;
  border: 1px solid #222;
  background: #fff;
  &:checked::after {
    content: "";
    display: block;
    width: 8px;
    height: 4px;
    margin: 2px 0 0 2px;
    border: solid #333;
    border-width: 0 0 1px 1px;
    transform: rotate(-45deg);
  }
`;

const LoadCaseBar = styled.div`
  display: flex;
  align-items: center;
  gap: 7px;
  height: 25px;
  padding: 0 3px 0 4px;
  background: #f5f5f5;
  > span {
    width: 67px;
    color: #55566a;
    font-size: 12px;
    white-space: nowrap;
  }
  output {
    width: 36px;
    text-align: center;
  }
`;

const Filler = styled.div`
  flex: 1;
  border-top: 1px solid #d0d0d0;
`;

const HelpText = styled.p`
  height: 95px;
  margin: 0;
  padding: 9px 12px;
  background: #fff;
  line-height: 13px;
`;

const Content = styled.div`
  display: flex;
  flex-direction: column;
  min-width: 0;
`;

const TabStrip = styled.div`
  display: flex;
  align-items: flex-end;
  height: 25px;
  padding: 0 0 1px 6px;
  border-bottom: 1px solid #fff;
  background: #bbcce4;
`;

const Tab = styled.button`
  height: 22px;
  padding: 0 8px;
  margin-right: 6px;
  border: none;
  border-radius: 3px 3px 0 0;
  background: ${(p) => (p.$active ? "#f3f8fe" : "none")};
`;

const Canvas = styled.section`
  position: relative;
  display: flex;
  justify-content: flex-end;
  flex: 1;
  min-height: 520px;
  padding: 42px 69px 0 0;
  border: 1px solid #e0e0e0;
  border-top: 2px solid #696969;
  border-left: 2px solid #696969;
  background: #fff;
`;

const Caption = styled.p`
  position: absolute;
  top: 6px;
  left: 9px;
  margin: 0;
  color: #333;
  font: 13px/19px "Noto Sans", "Open Sans", sans-serif;
`;

const ViewSwitch = styled.button`
  position: absolute;
  top: 4px;
  right: 5px;
  display: flex;
  flex-direction: column;
  justify-content: center;
  width: 24px;
  height: 24px;
  padding: 0 2px;
  border: 1px solid #ddd;
  background: #f3f3f3;
  color: #444;
  font-size: 9px;
  font-weight: 700;
  line-height: 9px;
  span:first-child {
    align-self: flex-start;
  }
  span:last-child {
    align-self: flex-end;
  }
`;

const Usage = styled.div`
  position: absolute;
  right: 5px;
  bottom: 0;
  color: #8a8a8a;
  font: 12px/17px "Noto Sans", "Open Sans", sans-serif;
  div {
    display: flex;
    align-items: center;
    gap: 4px;
    color: #222;
  }
`;

const UsageBar = styled.div`
  width: 68px;
  height: 12px;
  background: linear-gradient(#aaa, #f4f4f4 35%, #f4f4f4 65%, #aaa);
  div {
    height: 100%;
    background: linear-gradient(#9fc45c, #c8f27a 35%, #c8f27a 65%, #9fc45c);
  }
`;

const Dialog = styled.div`
  position: absolute;
  top: 92px;
  left: 53px;
  width: 652px;
  padding: 0 20px 3px 4px;
  border: 1px solid #707070;
  background: #f0f0f0;
  header {
    display: flex;
    align-items: center;
    justify-content: space-between;
    height: 30px;
    margin: 0 -20px 12px -4px;
    padding: 0 9px 0 8px;
    background: #fff;
    font: 12px/16px Roboto, "Open Sans", sans-serif;
  }
`;

const ResultFrame = styled.div`
  padding-bottom: 4px;
  border: 1px solid #000;
  background: #fff;
`;

const ResultTable = styled.table`
  width: 100%;
  table-layout: fixed;
  border-collapse: collapse;
  th,
  td {
    height: 22px;
    padding: 0 3px 0 2px;
    border: 1px solid #a0a0a0;
    text-align: left;
    white-space: nowrap;
  }
  th {
    height: 20px;
    border-color: #a0a0a0 #e2e2e2;
    font-weight: 400;
    text-align: center;
  }
  td:last-child {
    padding-right: 0;
  }
`;

const Degree = styled.div`
  display: flex;
  align-items: center;
  justify-content: space-between;
  padding-left: 3px;
`;

const Meter = styled.div`
  width: 103px;
  height: 13px;
  border: solid #dcdcdc;
  border-width: 0 1px 1px 0;
  background: #fffff0;
  div {
    height: 100%;
    background: linear-gradient(#4d8f4d, #157015);
    border-top: 1px solid #1c6b1c;
  }
`;

const Status = styled.div`
  height: 19px;
  margin-top: 9px;
  padding-left: 1px;
  border: 1px solid #fff;
  border-top: 2px solid #808080;
  border-left: 1px solid #808080;
  line-height: 14px;
`;

const LowerTabs = styled.div`
  display: flex;
  align-items: flex-end;
  height: 25px;
  margin-top: 4px;
  padding: 0 4px 1px 3px;
  background: #bbcce4;
  > :last-child {
    align-self: center;
    margin-left: auto;
  }
`;

const LowerTab = styled.button`
  display: flex;
  align-items: center;
  gap: 8px;
  height: 22px;
  padding: 0 ${(p) => (p.$active ? "20px" : "16px")} 0 ${(p) => (p.$active ? "6px" : "8px")};
  border: none;
  border-radius: 3px 3px 0 0;
  background: ${(p) => (p.$active ? "#f3f8fe" : "none")};
`;

const LowerPanel = styled.section`
  display: flex;
  align-items: flex-start;
  padding: 14px 0 2px 265px;
`;

const ForceTable = styled.table`
  table-layout: fixed;
  width: 780px;
  border-collapse: collapse;
  th {
    height: 22px;
    padding: 0;
    border: 1px solid #646464;
    background: #fff;
    font-weight: 400;
  }
`;

const UnitRow = styled.tr`
  && th {
    height: 21px;
    background: linear-gradient(#f0f0f0, #bcbcbc);
    color: #555;
  }
`;

const ForceRow = styled.tr`
  td {
    height: 21px;
    padding: 0 3px;
    border: 1px solid #646464;
    background: ${(p) => (p.$active ? "#f9d86c" : "#fff")};
    color: #7a7a7a;
    white-space: nowrap;
  }
  td:first-child {
    padding: 0 3px 0 0;
    border: none;
    background: none;
    text-align: right;
  }
  td:first-child {
    padding-right: 8px;
  }
  td:nth-child(4) {
    color: #000;
  }
  td:nth-child(n + 5) {
    text-align: right;
    color: ${(p) => (p.$active ? "#000" : "#7a7a7a")};
  }
  select {
    padding: 0;
    height: 19px;
  }
  ${PickBox} {
    margin-right: -2px;
  }
`;

const Scroller = styled.div`
  display: flex;
  flex-direction: column;
  justify-content: space-between;
  width: 16px;
  height: 40px;
  margin: 45px 6px 0 8px;
  padding: 4px 0 3px;
`;

const SideTools = styled.div`
  display: flex;
  flex-direction: column;
  gap: 4px;
`;

const SideButton = styled.button`
  display: flex;
  align-items: center;
  justify-content: center;
  width: 28px;
  height: 28px;
  padding: 0;
  border: 1px solid #adadad;
  background: #e1e1e1;
  &:disabled {
    border-color: #bfbfbf;
    background: #ccc;
  }
`;

const StatusBar = styled.footer`
  height: 22px;
  border-top: 1px solid #c8c8c8;
  background: #f3f2f1;
`;
